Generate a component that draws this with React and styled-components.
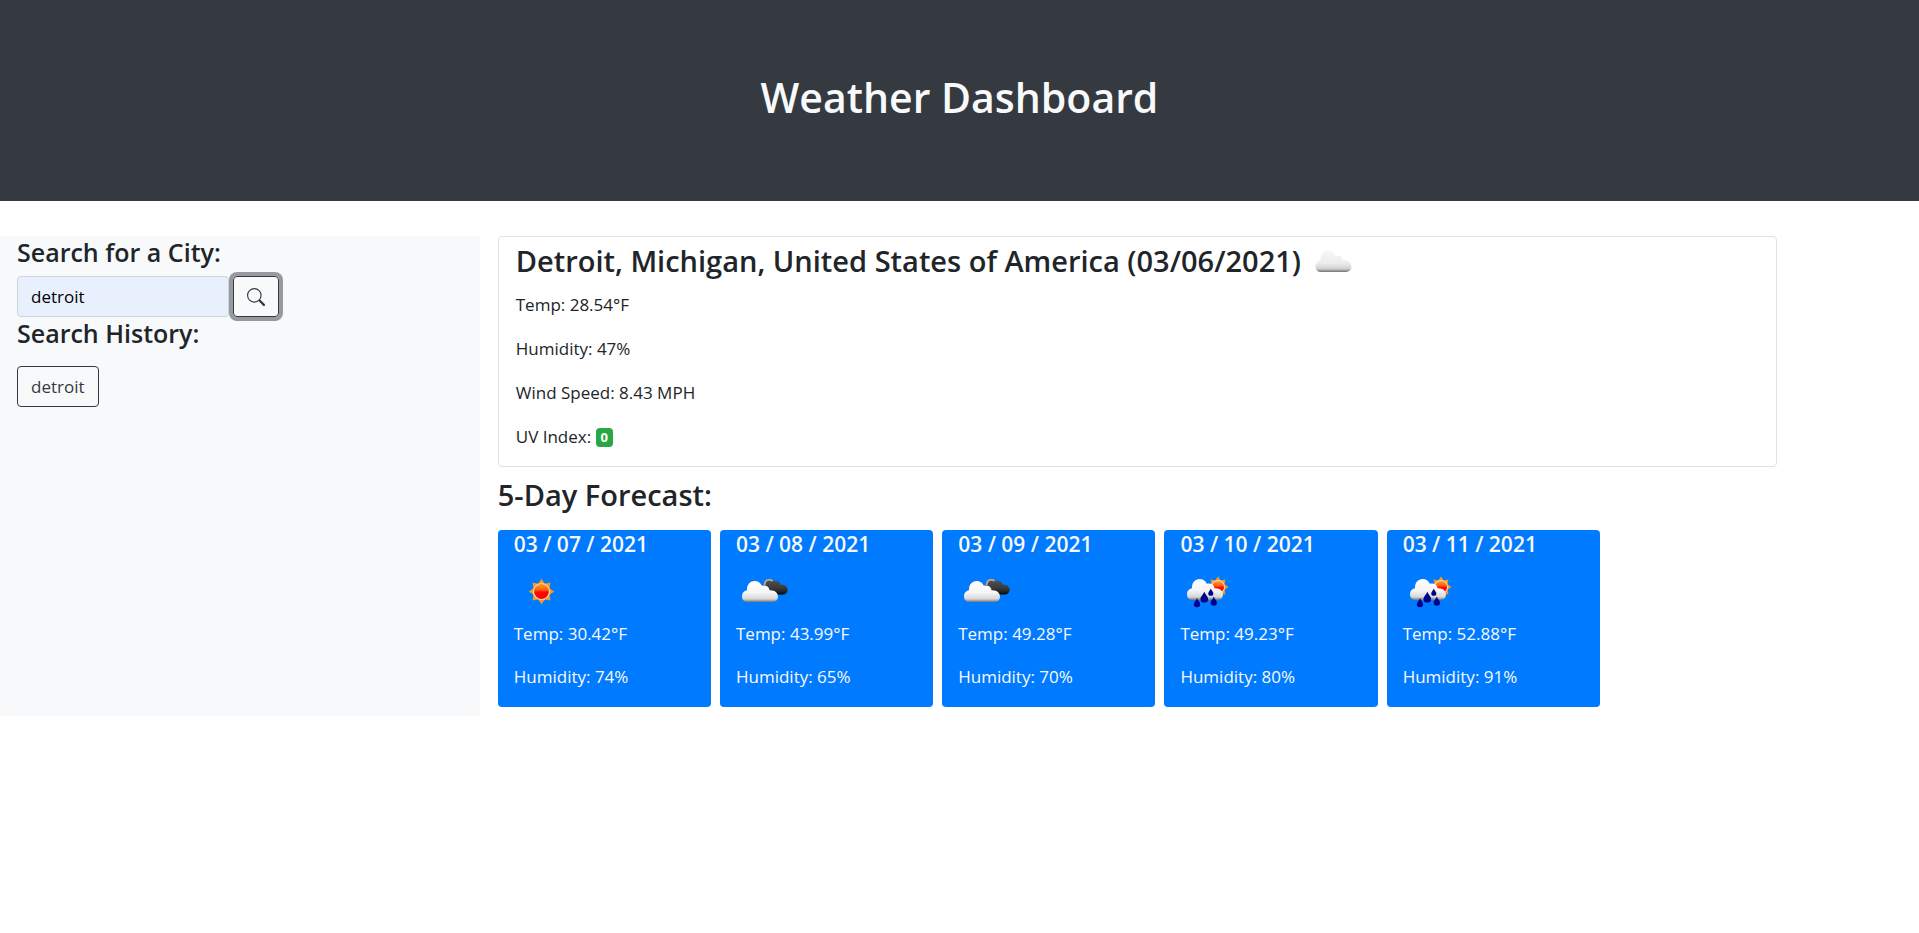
import React, { useId, useState } from "react";
import styled, { createGlobalStyle } from "styled-components";

const GlobalStyle = createGlobalStyle`
  *, *::before, *::after { box-sizing: border-box; }
  body {
    margin: 0;
    background: #fff;
    color: #212529;
    font-family: "Segoe UI", "Open Sans", "Noto Sans", sans-serif;
    font-size: 17px;
    line-height: 26px;
  }
  h1, h2, h3, h4, p { margin: 0; }
  button, input { font: inherit; }
`;

const Header = styled.header`
  padding: 71px 16px 77px;
  background: #343a40;
  color: #f8f9fa;
  text-align: center;
`;

const PageTitle = styled.h1`
  font-size: 41px;
  line-height: 53px;
  font-weight: 600;
`;

const Layout = styled.main`
  display: flex;
  align-items: stretch;
  gap: 18px;
  margin-top: 35px;
`;

const Sidebar = styled.aside`
  flex: 0 0 25%;
  padding: 0 17px;
  background: #f8f9fa;
  border-radius: 4px;
`;

const SidebarTitle = styled.h2`
  display: block;
  font-size: 25px;
  line-height: 33px;
  font-weight: 600;
`;

const SearchForm = styled.form`
  display: flex;
  gap: 4px;
  margin-top: 7px;
`;

const CityInput = styled.input`
  width: 212px;
  height: 41px;
  padding: 0 13px;
  border: 1px solid #ced4da;
  border-radius: 4px;
  background: #e8f0fe;
  color: #000;
  outline: none;
`;

const OutlineButton = styled.button`
  display: inline-flex;
  align-items: center;
  justify-content: center;
  height: 41px;
  padding: 0 13px;
  border: 1px solid #343a40;
  border-radius: 4px;
  background: transparent;
  color: #343a40;
  cursor: pointer;
  box-shadow: ${(p) => (p.$ring ? "0 0 0 4px rgba(52, 58, 64, 0.5)" : "none")};
`;

const HistoryList = styled.div`
  margin-top: 16px;
`;

const Results = styled.section`
  flex: 0 0 66.6667%;
  min-width: 0;
  padding-bottom: 9px;
`;

const CurrentCard = styled.article`
  padding: 5px 17px 16px;
  border: 1px solid #dee2e6;
  border-radius: 4px;
`;

const SectionTitle = styled.h2`
  display: flex;
  align-items: center;
  gap: 14px;
  font-size: 29px;
  line-height: 38px;
  font-weight: 600;
`;

const Readings = styled.div`
  display: grid;
  gap: ${(p) => (p.$spaced ? "18px" : "17px")};
  margin-top: ${(p) => (p.$spaced ? "12px" : "0")};
`;

const Badge = styled.span`
  display: inline-block;
  padding: 0 5px;
  border-radius: 4px;
  background: #28a745;
  color: #fff;
  font-size: 13px;
  line-height: 19px;
  font-weight: 700;
  vertical-align: 1px;
`;

const ForecastTitle = styled(SectionTitle)`
  margin: 9px 0 16px;
`;

const ForecastRow = styled.div`
  display: flex;
  gap: 9px;
`;

const ForecastCard = styled.article`
  flex: 0 0 16.6667%;
  padding: 0 16px 17px;
  border-radius: 4px;
  background: #007bff;
  color: #f8f9fa;
`;

const ForecastDate = styled.h3`
  font-size: 21px;
  line-height: 28px;
  font-weight: 600;
`;

const Picture = styled.svg`
  display: block;
  margin: 6px 0 2px;
`;

const CLOUD =
  "M6 21C2.2 21 0 18.600 0 15.400C0 12 2.200 9.800 5 9.300C4.600 3.600 8.200 0 12.600 0C15.900 0 18.600 1.800 19.800 4.800C23.800 3.600 27.200 5.800 27.600 9.200C32.800 8.800 36 11.800 36 15.600C36 18.800 33.800 21 30.400 21Z";

function CloudFill({ id, dark }) {
  return (
    <linearGradient id={id} x1="0" y1="0" x2="0" y2="1">
      <stop offset="0" stopColor={dark ? "#555" : "#fff"} />
      <stop offset="0.55" stopColor={dark ? "#3c3c3c" : "#f5f5f5"} />
      <stop offset="0.85" stopColor={dark ? "#222" : "#d8d8d8"} />
      <stop offset="1" stopColor={dark ? "#000" : "#777"} />
    </linearGradient>
  );
}

function SunShape({ fill }) {
  const rays = [0, 45, 90, 135, 180, 225, 270, 315];
  return (
    <>
      {rays.map((a) => (
        <path key={a} d="M-3.600 -7.500L0 -12.800L3.600 -7.500Z" fill="#f79a1c" transform={`rotate(${a})`} />
      ))}
      <circle r="8.600" fill="#ffd9b0" />
      <circle r="7.400" fill={`url(#${fill})`} />
    </>
  );
}

function SunFill({ id }) {
  return (
    <linearGradient id={id} x1="0" y1="0" x2="0" y2="1">
      <stop offset="0" stopColor="#ffa020" />
      <stop offset="0.4" stopColor="#ff5a10" />
      <stop offset="0.55" stopColor="#ff0800" />
      <stop offset="1" stopColor="#ff0000" />
    </linearGradient>
  );
}

function CloudIcon() {
  const id = useId();
  return (
    <svg width="37" height="23" viewBox="-0.500 -1 37 23" role="img" aria-label="Cloudy">
      <defs>
        <linearGradient id={id} x1="0" y1="0" x2="0" y2="1">
          <stop offset="0" stopColor="#f6f6f6" />
          <stop offset="0.6" stopColor="#ececec" />
          <stop offset="0.85" stopColor="#cfcfcf" />
          <stop offset="1" stopColor="#707070" />
        </linearGradient>
      </defs>
      <path d={CLOUD} fill={`url(#${id})`} />
    </svg>
  );
}

function WeatherPicture({ kind }) {
  const id = useId();
  const light = `${id}l`;
  const dark = `${id}d`;
  const sun = `${id}s`;
  const labels = { sun: "Clear sky", clouds: "Broken clouds", rain: "Rain" };
  return (
    <Picture width="55" height="55" viewBox="0 0 55 55" role="img" aria-label={labels[kind]}>
      <defs>
        <CloudFill id={light} />
        <CloudFill id={dark} dark />
        <SunFill id={sun} />
      </defs>
      {kind === "sun" && (
        <g transform="translate(27.500 27.500)">
          <SunShape fill={sun} />
        </g>
      )}
      {kind === "clouds" && (
        <>
          <path
            d="M27 24C27 18 29 14.800 33 14.800C36 14.800 37.500 16 38.400 17.400C41 16.400 44.200 17.600 44.800 20.800C49 20.400 51.600 22.600 51.600 25.800C51.600 28.800 49.600 30.500 47 30.500H36Z"
            fill={`url(#${dark})`}
          />
          <path d="M28.500 21C28.800 17.200 30.600 15.700 33.200 15.700C35 15.700 36 16.300 36.600 17" fill="none" stroke="#a8a8a8" strokeWidth="2" />
          <g transform="translate(6 17)">
            <path d={CLOUD} fill={`url(#${light})`} />
          </g>
        </>
      )}
      {kind === "rain" && (
        <>
          <g transform="translate(38 23) scale(0.820)">
            <SunShape fill={sun} />
          </g>
          <g transform="translate(7 15)">
            <path d={CLOUD} fill={`url(#${light})`} />
          </g>
          {[
            [17, 34, 1],
            [24.300, 27.500, 1.200],
            [30.800, 24.500, 0.800],
            [33.800, 32.500, 1],
          ].map(([x, y, s]) => (
            <path
              key={x}
              d="M0 0C0.600 2.400 3.200 4.200 3.200 6.200A3.200 3 0 0 1 -3.200 6.200C-3.200 4.200 -0.600 2.400 0 0Z"
              fill="#00008c"
              transform={`translate(${x} ${y}) scale(${s})`}
            />
          ))}
        </>
      )}
    </Picture>
  );
}

function SearchIcon() {
  return (
    <svg width="18" height="18" viewBox="0 0 16 16" fill="currentColor" aria-hidden="true">
      <path d="M10.442 10.442a1 1 0 0 1 1.415 0l3.850 3.850a1 1 0 0 1-1.414 1.415l-3.850-3.850a1 1 0 0 1 0-1.415z" />
      <path d="M6.500 12a5.500 5.500 0 1 0 0-11 5.500 5.500 0 0 0 0 11zM13 6.500a6.500 6.500 0 1 1-13 0 6.500 6.500 0 0 1 13 0z" />
    </svg>
  );
}

const forecast = [
  { date: "03 / 07 / 2021", kind: "sun", temp: "30.42", humidity: 74 },
  { date: "03 / 08 / 2021", kind: "clouds", temp: "43.99", humidity: 65 },
  { date: "03 / 09 / 2021", kind: "clouds", temp: "49.28", humidity: 70 },
  { date: "03 / 10 / 2021", kind: "rain", temp: "49.23", humidity: 80 },
  { date: "03 / 11 / 2021", kind: "rain", temp: "52.88", humidity: 91 },
];

export default function App() {
  const [city, setCity] = useState("detroit");
  return (
    <>
      <GlobalStyle />
      <Header>
        <PageTitle>Weather Dashboard</PageTitle>
      </Header>
      <Layout>
        <Sidebar>
          <SidebarTitle as="label" htmlFor="city">Search for a City:</SidebarTitle>
          <SearchForm onSubmit={(e) => e.preventDefault()}>
            <CityInput id="city" value={city} onChange={(e) => setCity(e.target.value)} />
            <OutlineButton type="submit" aria-label="Search" $ring>
              <SearchIcon />
            </OutlineButton>
          </SearchForm>
          <SidebarTitle>Search History:</SidebarTitle>
          <HistoryList>
            <OutlineButton type="button" onClick={() => setCity("detroit")}>detroit</OutlineButton>
          </HistoryList>
        </Sidebar>
        <Results>
          <CurrentCard>
            <SectionTitle>
              Detroit, Michigan, United States of America (03/06/2021)
              <CloudIcon />
            </SectionTitle>
            <Readings $spaced>
              <p>Temp: 28.54°F</p>
              <p>Humidity: 47%</p>
              <p>Wind Speed: 8.43 MPH</p>
              <p>UV Index: <Badge>0</Badge></p>
            </Readings>
          </CurrentCard>
          <ForecastTitle>5-Day Forecast:</ForecastTitle>
          <ForecastRow>
            {forecast.map((day) => (
              <ForecastCard key={day.date}>
                <ForecastDate>{day.date}</ForecastDate>
                <WeatherPicture kind={day.kind} />
                <Readings>
                  <p>Temp: {day.temp}°F</p>
                  <p>Humidity: {day.humidity}%</p>
                </Readings>
              </ForecastCard>
            ))}
          </ForecastRow>
        </Results>
      </Layout>
    </>
  );
}
